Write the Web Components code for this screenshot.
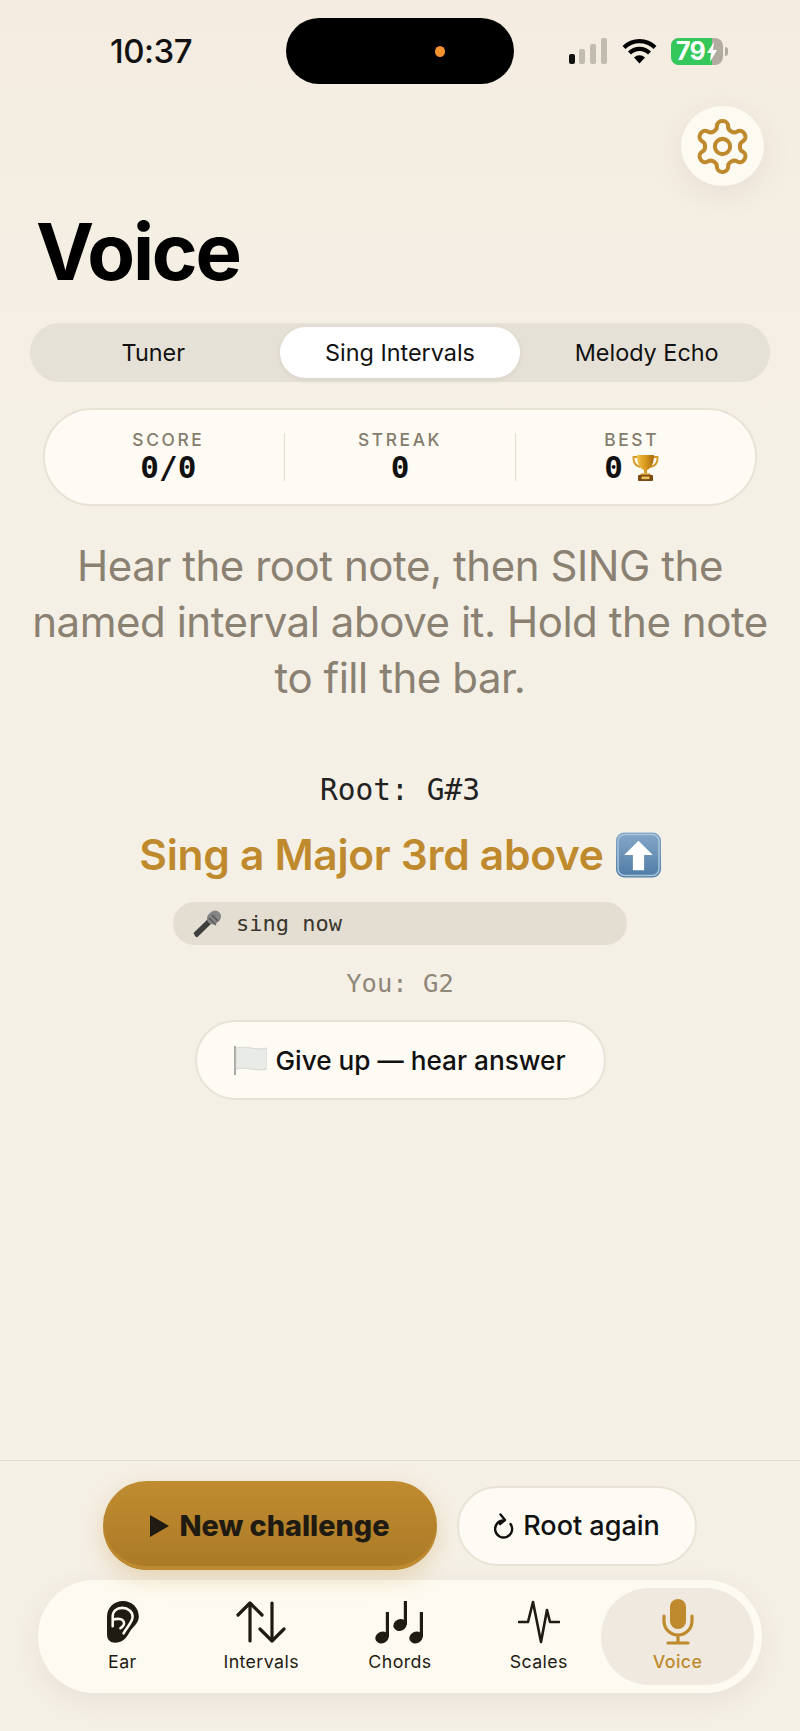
<!DOCTYPE html>
<html>
<head>
<meta charset="utf-8">
<style>
  html, body { margin: 0; background: #f5f0e6; }
  body { font-family: Inter, "Noto Sans", sans-serif; color: #111; }
  voice-app { height: 1731px; }
</style>
</head>
<body>
<voice-app></voice-app>
<script>
const MONO = '"DejaVu Sans Mono", "Liberation Mono", monospace';
const INK = "#1f1a12";
const GOLD = "#bf8a2e";

class StatusBar extends HTMLElement {
    constructor() {
        super();
        this.attachShadow({mode: "open"});
    }
    connectedCallback() {
        this.shadowRoot.innerHTML = /* html */`
        <style>
        :host { display: grid; grid-template-columns: 286px 228px 1fr; padding-top: 18px; height: 66px; align-items: center; }
        .time { font-size: 33px; font-weight: 500; color: #111; padding-left: 16px; text-align: center; letter-spacing: -.5px; }
        .island { height: 66px; background: #000; border-radius: 33px; display: flex; justify-content: flex-end; align-items: center; padding-right: 69px; }
        .dot { width: 10px; height: 11px; border-radius: 50%; background: #f7932f; }
        .right { display: flex; align-items: center; padding-left: 54px; gap: 14px; }
        .batt { display: flex; align-items: center; width: 52px; height: 27px; border-radius: 8px; overflow: hidden; background: #b1aba0; position: relative; }
        .fill { position: absolute; left: 0; top: 0; bottom: 0; width: 41px; background: #34c759; }
        .pct { position: relative; font-size: 25px; font-weight: 700; color: #fff; padding-left: 5px; letter-spacing: -.8px; }
        .wrap { display: flex; align-items: center; gap: 2px; }
        .nub { width: 3px; height: 9px; background: #b1aba0; border-radius: 0 3px 3px 0; }
        </style>
        <div class="time">10:37</div>
        <div class="island"><span class="dot"></span></div>
        <div class="right">
            <svg width="40" height="26" viewBox="0 0 40 26"><rect x="1" y="16" width="6" height="10" rx="2" fill="#111"/><rect x="11" y="11" width="6" height="15" rx="2" fill="#c2bcb0"/><rect x="22" y="6" width="6" height="20" rx="2" fill="#c2bcb0"/><rect x="33" y="0" width="6" height="26" rx="2" fill="#c2bcb0"/></svg>
            <svg width="35" height="26" viewBox="0 0 35 26"><path d="M2 9.500a22 22 0 0 1 31 0M7.500 15a14 14 0 0 1 20 0" fill="none" stroke="#000" stroke-width="4.200"/><path d="M12 19.500a8 8 0 0 1 11 0l-5.500 6z" fill="#000"/></svg>
            <div class="wrap">
                <div class="batt"><span class="fill"></span><span class="pct">79</span>
                    <svg style="position:absolute;left:35px;top:4px" width="12" height="20" viewBox="0 0 12 20"><path d="M8 0L1 11h4l-1 9 7-12H7z" fill="#fff"/></svg>
                </div><span class="nub"></span>
            </div>
        </div>`;
    }
}

class SettingsButton extends HTMLElement {
    constructor() {
        super();
        this.attachShadow({mode: "open"});
    }
    connectedCallback() {
        this.shadowRoot.innerHTML = /* html */`
        <style>
        :host { display: flex; width: 83px; height: 80px; border-radius: 50%; background: #fdfaf2; align-items: center; justify-content: center; box-shadow: 0 8px 32px rgba(90,70,30,.08); }
        </style>
        <svg width="61" height="61" viewBox="0 0 24 24" fill="none" stroke="${GOLD}" stroke-width="1.600" stroke-linecap="round" stroke-linejoin="round"><path d="M12.220 2h-.44a2 2 0 0 0-2 2v.18a2 2 0 0 1-1 1.730l-.43.25a2 2 0 0 1-2 0l-.15-.08a2 2 0 0 0-2.730.73l-.22.38a2 2 0 0 0 .73 2.730l.15.1a2 2 0 0 1 1 1.720v.51a2 2 0 0 1-1 1.740l-.15.09a2 2 0 0 0-.73 2.730l.22.38a2 2 0 0 0 2.730.73l.15-.08a2 2 0 0 1 2 0l.43.25a2 2 0 0 1 1 1.730V20a2 2 0 0 0 2 2h.44a2 2 0 0 0 2-2v-.18a2 2 0 0 1 1-1.730l.43-.25a2 2 0 0 1 2 0l.15.08a2 2 0 0 0 2.730-.73l.22-.39a2 2 0 0 0-.73-2.730l-.15-.08a2 2 0 0 1-1-1.740v-.5a2 2 0 0 1 1-1.740l.15-.09a2 2 0 0 0 .73-2.730l-.22-.38a2 2 0 0 0-2.730-.73l-.15.08a2 2 0 0 1-2 0l-.43-.25a2 2 0 0 1-1-1.730V4a2 2 0 0 0-2-2z"/><circle cx="12" cy="12" r="3"/></svg>`;
    }
}

class SegTabs extends HTMLElement {
    constructor() {
        super();
        this.attachShadow({mode: "open"});
        this.items = ["Tuner", "Sing Intervals", "Melody Echo"];
    }
    connectedCallback() {
        this.shadowRoot.innerHTML = /* html */`
        <style>
        :host { display: grid; grid-template-columns: repeat(3, 1fr); height: 59px; background: #e6e1d6; border-radius: 30px; font-size: 23.400px; font-weight: 400; color: #111; }
        .seg { display: flex; align-items: center; justify-content: center; margin: 4px 3px; border-radius: 26px; }
        .seg.on { background: #fff; box-shadow: 0 2px 6px rgba(60,50,30,.08); }
        </style>
        ${this.items.map((t, i) => `<div class="seg ${i == 1 ? "on" : ""}">${t}</div>`).join("")}`;
    }
}

class StatCell extends HTMLElement {
    constructor() {
        super();
        this.attachShadow({mode: "open"});
    }
    connectedCallback() {
        this.shadowRoot.innerHTML = /* html */`
        <style>
        :host { display: flex; flex-direction: column; align-items: center; flex: 1 1 0; }
        .label { font-size: 17.400px; line-height: 21px; font-weight: 500; letter-spacing: 2.600px; color: #857c6e; }
        .value { display: flex; align-items: center; gap: 9px; height: 35px; font-family: ${MONO}; font-size: 31px; line-height: 35px; font-weight: 700; color: #111; }
        </style>
        <div class="label">${this.getAttribute("label")}</div>
        <div class="value">${this.getAttribute("value")}<slot></slot></div>`;
    }
}

class StatCard extends HTMLElement {
    constructor() {
        super();
        this.attachShadow({mode: "open"});
    }
    connectedCallback() {
        this.shadowRoot.innerHTML = /* html */`
        <style>
        :host { display: flex; align-items: center; height: 94px; padding: 0 8px; background: #fdfbf3; border: 2px solid #e8e3d6; border-radius: 49px; }
        </style>
        <slot></slot>`;
    }
}

class SingPrompt extends HTMLElement {
    constructor() {
        super();
        this.attachShadow({mode: "open"});
    }
    connectedCallback() {
        this.shadowRoot.innerHTML = /* html */`
        <style>
        :host { display: flex; flex-direction: column; align-items: center; }
        .root { font-family: ${MONO}; font-size: 29.500px; line-height: 36px; color: #222; }
        .sing { display: flex; align-items: center; gap: 12px; margin-top: 21px; font-size: 42.500px; line-height: 52px; font-weight: 600; color: ${GOLD}; letter-spacing: -.3px; }
        .meter { box-sizing: border-box; display: flex; align-items: center; gap: 15px; width: 454px; height: 43px; margin-top: 21px; padding-left: 20px; background: #e3ddd2; border-radius: 22px; font-family: ${MONO}; font-size: 22px; color: #3a362e; }
        .you { font-family: ${MONO}; font-size: 25.500px; line-height: 30px; margin-top: 23px; color: #8f8778; }
        .giveup { box-sizing: border-box; display: flex; align-items: center; justify-content: center; gap: 8px; width: 411px; height: 80px; margin-top: 22px; background: #fdfbf3; border: 2px solid #e8e3d6; border-radius: 40px; font-size: 26.200px; font-weight: 500; color: #111; }
        </style>
        <div class="root">Root: G#3</div>
        <div class="sing">Sing a Major 3rd above
            <svg width="45" height="46" viewBox="0 0 44 44"><defs><linearGradient id="a" x1="0" y1="0" x2="0" y2="1"><stop offset="0" stop-color="#86a8c8"/><stop offset="1" stop-color="#4f7ba6"/></linearGradient></defs><rect width="44" height="44" rx="8" fill="url(#a)"/><rect x="2" y="2" width="40" height="40" rx="6.500" fill="none" stroke="#a9c3da" stroke-width="1.500"/><path d="M22 8L36 22H27.500V37H16.500V22H8z" fill="#fff"/></svg>
        </div>
        <div class="meter">
            <svg width="28" height="30" viewBox="0 0 28 30"><path d="M2 27l-1.500-3L15 10l4 4L4 28.500z" fill="#3e3e3e"/><rect x="15" y="1" width="12" height="15" rx="6" transform="rotate(45 21 8.500)" fill="#858585"/><path d="M16 9l7 7M19 6l6 6" stroke="#555" stroke-width="1.500"/></svg>
            <span>sing now</span>
        </div>
        <div class="you">You: G2</div>
        <div class="giveup">
            <svg width="33" height="30" viewBox="0 0 33 30"><path d="M1 1v29" stroke="#a8a8a4" stroke-width="2"/><path d="M2 3c10-3 20 3 31 0v21c-11 3-21-3-31 0z" fill="#e9ebe8" stroke="#cfd1cc" stroke-width=".8"/></svg>
            <span>Give up — hear answer</span>
        </div>`;
    }
}

class ActionRow extends HTMLElement {
    constructor() {
        super();
        this.attachShadow({mode: "open"});
    }
    connectedCallback() {
        this.shadowRoot.innerHTML = /* html */`
        <style>
        :host { display: flex; align-items: center; justify-content: center; gap: 20px; }
        .btn { box-sizing: border-box; display: flex; align-items: center; justify-content: center; border-radius: 44px; }
        .main { width: 334px; height: 89px; gap: 10px; background: linear-gradient(#c08c30, #ab7a26); box-shadow: inset 0 -4px 0 #bd8a30, 0 8px 24px rgba(190,138,46,.28); font-size: 28.800px; font-weight: 800; color: ${INK}; }
        .alt { width: 240px; height: 80px; gap: 9px; background: #fdfbf3; border: 2px solid #e8e3d6; font-size: 27px; font-weight: 500; color: #111; }
        </style>
        <div class="btn main">
            <svg width="19" height="22" viewBox="0 0 19 22"><path d="M0 0l19 11L0 22z" fill="${INK}"/></svg>
            <span>New challenge</span>
        </div>
        <div class="btn alt">
            <svg width="20" height="26" viewBox="0 0 20 26" fill="none" stroke="#111" stroke-width="2.400" stroke-linecap="round" stroke-linejoin="round"><path d="M10 7.500A8.500 8.500 0 1 0 16.500 11"/><path d="M6.500 1.500L11 7l-5 4"/></svg>
            <span>Root again</span>
        </div>`;
    }
}

const TAB_ICONS = {
    ear: `<svg width="33" height="44" viewBox="0 0 32 42"><path d="M16.500 .7C25 .7 31.800 7 31.800 15.700 31.800 22 27 25 24 29 21 33 19 41 9 41 4 41 1 38 1 33V15.700C1 7 8 .7 16.500 .7z" fill="${INK}"/><path d="M6.500 25V16C6.500 10.500 10.500 7.300 15.800 7.300 21.500 7.300 25.800 11 25.800 16 25.800 21 21 25 17 32M6.500 19C10 17.500 17 17 17.500 22 17.700 24 16 25.500 14 27" fill="none" stroke="#fdfbf1" stroke-width="2.500" stroke-linecap="round"/></svg>`,
    intervals: `<svg width="50" height="42" viewBox="0 0 50 42" fill="none" stroke="${INK}" stroke-width="3.200" stroke-linecap="round" stroke-linejoin="round"><path d="M14 40V2M2 14L14 2l12 12M36 2v38M24 28l12 12 12-12"/></svg>`,
    chords: `<svg width="50" height="44" viewBox="0 0 50 44"><g fill="${INK}"><ellipse cx="7" cy="37.500" rx="6.800" ry="5.800" transform="rotate(-25 7 37.500)"/><rect x="10.800" y="12" width="3.200" height="25"/><ellipse cx="25" cy="25" rx="6.800" ry="5.800" transform="rotate(-25 25 25)"/><rect x="28.800" y="1" width="3.200" height="24"/><ellipse cx="41" cy="37.500" rx="6.800" ry="5.800" transform="rotate(-25 41 37.500)"/><rect x="44.800" y="12" width="3.200" height="25"/></g></svg>`,
    scales: `<svg width="42" height="44" viewBox="0 0 42 44" fill="none" stroke="${INK}" stroke-width="2.600" stroke-linecap="round" stroke-linejoin="round"><path d="M1 22h9L15 2l8 40 6-32 3 12h9"/></svg>`,
    voice: `<svg width="32" height="46" viewBox="0 0 32 46"><rect x="8" y="0" width="16" height="30" rx="8" fill="${GOLD}"/><path d="M2 17v5a14 14 0 0 0 28 0v-5M16 36v7M6 44h20" fill="none" stroke="${GOLD}" stroke-width="3.200" stroke-linecap="round"/></svg>`
};

class TabItem extends HTMLElement {
    constructor() {
        super();
        this.attachShadow({mode: "open"});
    }
    connectedCallback() {
        const name = this.getAttribute("icon");
        this.shadowRoot.innerHTML = /* html */`
        <style>
        :host { display: flex; flex-direction: column; align-items: center; justify-content: flex-end; height: 97px; position: relative; font-size: 17.800px; font-weight: 400; letter-spacing: .4px; color: ${INK}; }
        :host([active]) { color: ${GOLD}; font-weight: 500; }
        :host([active])::before { content: ""; position: absolute; top: 0; bottom: 0; left: -7px; right: -7px; background: #efe9df; border-radius: 48px; }
        .ic { position: relative; height: 46px; display: flex; align-items: center; justify-content: center; }
        .lb { position: relative; line-height: 24px; margin-top: 5px; margin-bottom: 11px; }
        </style>
        <div class="ic">${TAB_ICONS[name]}</div>
        <div class="lb"><slot></slot></div>`;
    }
}

class TabBar extends HTMLElement {
    constructor() {
        super();
        this.attachShadow({mode: "open"});
    }
    connectedCallback() {
        this.shadowRoot.innerHTML = /* html */`
        <style>
        :host { display: grid; grid-template-columns: repeat(5, 1fr); height: 97px; padding: 8px 15px; background: #fdfbf1; border-radius: 56px; box-shadow: 0 8px 28px rgba(80,65,30,.08); }
        </style>
        <slot></slot>`;
    }
}

class VoiceApp extends HTMLElement {
    constructor() {
        super();
        this.attachShadow({mode: "open"});
    }
    connectedCallback() {
        this.shadowRoot.innerHTML = /* html */`
        <style>
        :host { display: flex; flex-direction: column; background: linear-gradient(#f4ece0, #f5f0e6 420px); overflow: hidden; }
        main { flex: 1; display: flex; flex-direction: column; }
        .top { display: flex; justify-content: flex-end; padding: 22px 36px 0 0; }
        h1 { margin: 22px 0 0 36px; font-size: 78px; line-height: 88px; font-weight: 700; color: #000; letter-spacing: -2.200px; }
        seg-tabs { margin: 27px 30px 0; }
        stat-card { margin: 26px 43px 0; }
        .sep { flex: none; width: 1px; height: 48px; background: #e3ddd0; }
        p { margin: 32px 20px 0; font-size: 42px; line-height: 56px; text-align: center; color: #8a8172; font-weight: 400; letter-spacing: -.45px; }
        sing-prompt { margin-top: 66px; }
        footer { border-top: 1px solid #e2ddd1; padding-top: 20px; }
        tab-bar { margin: 10px 38px 38px; }
        </style>
        <status-bar></status-bar>
        <main>
            <div class="top"><settings-button></settings-button></div>
            <h1>Voice</h1>
            <seg-tabs></seg-tabs>
            <stat-card>
                <stat-cell label="SCORE" value="0/0"></stat-cell>
                <div class="sep"></div>
                <stat-cell label="STREAK" value="0"></stat-cell>
                <div class="sep"></div>
                <stat-cell label="BEST" value="0"><svg width="27" height="28" viewBox="0 0 27 27"><defs><linearGradient id="t" x1="0" x2="1"><stop offset="0" stop-color="#f0c247"/><stop offset=".5" stop-color="#d99a1e"/><stop offset="1" stop-color="#a86a10"/></linearGradient></defs><path d="M5.500 2.500H1.500C1 8 4 11.500 8.500 12.500M21.500 2.500H25.500C26 8 23 11.500 18.500 12.500" fill="none" stroke="#d39a24" stroke-width="1.800"/><path d="M5 .5H22C22 8 19.500 14 15 15.500V19H12V15.500C7.500 14 5 8 5 .5z" fill="url(#t)"/><path d="M9 19h9l1 1.500H8z" fill="#c98f20"/><rect x="6" y="20.500" width="15" height="6" rx="1" fill="#7a4a12"/><rect x="9.500" y="22" width="8" height="2.600" fill="#e9c260"/></svg></stat-cell>
            </stat-card>
            <p>Hear the root note, then SING the named interval above it. Hold the note to fill the bar.</p>
            <sing-prompt></sing-prompt>
        </main>
        <footer>
            <action-row></action-row>
            <tab-bar>
                <tab-item icon="ear">Ear</tab-item>
                <tab-item icon="intervals">Intervals</tab-item>
                <tab-item icon="chords">Chords</tab-item>
                <tab-item icon="scales">Scales</tab-item>
                <tab-item icon="voice" active>Voice</tab-item>
            </tab-bar>
        </footer>`;
    }
}

customElements.define("status-bar", StatusBar);
customElements.define("settings-button", SettingsButton);
customElements.define("seg-tabs", SegTabs);
customElements.define("stat-cell", StatCell);
customElements.define("stat-card", StatCard);
customElements.define("sing-prompt", SingPrompt);
customElements.define("action-row", ActionRow);
customElements.define("tab-item", TabItem);
customElements.define("tab-bar", TabBar);
customElements.define("voice-app", VoiceApp);
</script>
</body>
</html>
